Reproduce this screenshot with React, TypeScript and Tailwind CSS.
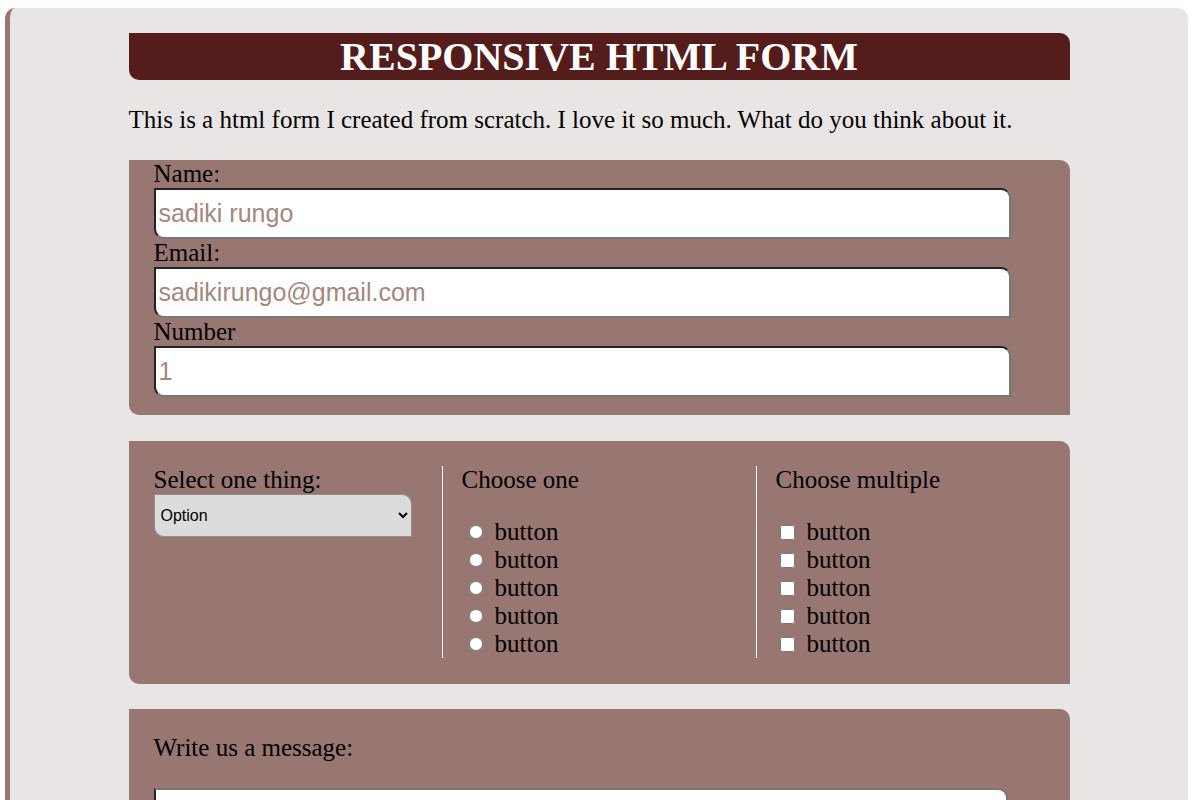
import React from 'react';

const inputClass =
  "block w-[857px] h-[51px] bg-white border-2 border-t-[#222] border-l-[#222] border-r-[#777] border-b-[#777] rounded-tr-[10px] rounded-bl-[10px] px-[3px] text-[25px] leading-[28px] font-['Liberation_Sans',Arial,sans-serif] text-black placeholder:text-[#a4877f] outline-none";

const rows = ['button', 'button', 'button', 'button', 'button'];

export default function App() {
  return (
    <div className="min-h-screen bg-white pt-[8px] pl-[5px] pr-[12px] font-['Liberation_Serif','Times_New_Roman',serif] text-black">
      <div className="rounded-[10px] border-l-[5px] border-[#987672] bg-[#eae5e5] pt-[25px] pb-[40px]">
        <div className="mx-auto w-[941px]">
          {/* Title bar */}
          <div className="flex h-[47px] items-center justify-center rounded-tr-[10px] rounded-bl-[10px] bg-[#541c1b]">
            <h1 className="text-[40px] font-bold leading-none text-white">RESPONSIVE HTML FORM</h1>
          </div>

          <p className="my-[26px] text-[25px] leading-[28px]">
            This is a html form I created from scratch. I love it so much. What do you think about it.
          </p>

          {/* Personal details */}
          <div className="rounded-tr-[10px] rounded-bl-[10px] bg-[#987672] px-[25px] pb-[18px] text-[25px] leading-[28px]">
            <label className="block">Name:</label>
            <input type="text" placeholder="sadiki rungo" className={inputClass} />
            <label className="block">Email:</label>
            <input type="email" placeholder="sadikirungo@gmail.com" className={inputClass} />
            <label className="block">Number</label>
            <input type="text" placeholder="1" className={inputClass} />
          </div>

          {/* Choices */}
          <div className="mt-[26px] flex rounded-tr-[10px] rounded-bl-[10px] bg-[#987672] px-[25px] pt-[25px] pb-[26px] text-[25px] leading-[28px]">
            <div className="w-[288px]">
              <label className="block">Select one thing:</label>
              <select className="block h-[43px] w-[258px] rounded-tr-[10px] rounded-bl-[10px] border border-[#8f8f8f] bg-[#dcdcdc] pl-[2px] text-[16px] font-['Liberation_Sans',Arial,sans-serif] text-black">
                <option>Option</option>
                <option>Option 2</option>
              </select>
            </div>

            <div className="w-[314px] border-l border-white pl-[19px]">
              <div>Choose one</div>
              <div className="h-[24px]" />
              {rows.map((r, i) => (
                <label key={i} className="flex h-[28px] items-center">
                  <input type="radio" name="one" className="m-0 ml-[7px] mr-[12px] h-[14px] w-[14px]" />
                  {r}
                </label>
              ))}
            </div>

            <div className="flex-1 border-l border-white pl-[19px]">
              <div>Choose multiple</div>
              <div className="h-[24px]" />
              {rows.map((r, i) => (
                <label key={i} className="flex h-[28px] items-center">
                  <input type="checkbox" className="m-0 ml-[4px] mr-[12px] h-[15px] w-[15px]" />
                  {r}
                </label>
              ))}
            </div>
          </div>

          {/* Message */}
          <div className="mt-[25px] rounded-tr-[10px] rounded-bl-[10px] bg-[#987672] px-[25px] pt-[25px] pb-[25px] text-[25px] leading-[28px]">
            <label className="block">Write us a message:</label>
            <textarea
              className="mt-[26px] block h-[150px] w-[854px] resize-none rounded-tr-[10px] rounded-bl-[10px] border-2 border-t-[#777] border-l-[#222] border-r-[#777] border-b-[#777] bg-white px-[3px] text-[24px] font-['Liberation_Sans',Arial,sans-serif] outline-none"
            />
          </div>
        </div>
      </div>
    </div>
  );
}
